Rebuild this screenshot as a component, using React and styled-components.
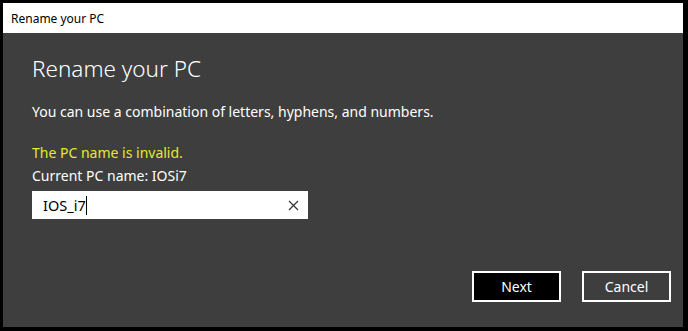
import React from 'react';
import styled, { createGlobalStyle } from 'styled-components';

const GlobalStyle = createGlobalStyle`
  html, body {
    margin: 0;
    padding: 0;
    background: #000;
  }
  body {
    font-family: "Noto Sans", "Open Sans", sans-serif;
  }
`;

const Screen = styled.div`
  width: 688px;
  height: 331px;
  padding: 3px 5px 4px 3px;
  box-sizing: border-box;
  background: #000;
`;

const Dialog = styled.div`
  height: 100%;
  display: flex;
  flex-direction: column;
  background: #3e3e3e;
`;

const TitleBar = styled.div`
  height: 30px;
  background: #fff;
  display: flex;
  align-items: center;
  padding-left: 8px;
  font-size: 12px;
  color: #000;
`;

const Body = styled.div`
  flex: 1;
  display: flex;
  flex-direction: column;
  padding: 21px 12px 25px 29px;
  color: #fff;
`;

const Heading = styled.h1`
  margin: 0;
  font-size: 22.5px;
  font-weight: 300;
  line-height: 30px;
`;

const Text = styled.p`
  margin: ${p => p.$top || 0}px 0 0;
  font-size: 14px;
  line-height: 22px;
  color: ${p => (p.$warn ? '#e8e830' : '#fff')};
`;

const Field = styled.div`
  margin-top: 4px;
  width: 276px;
  height: 28px;
  background: #fff;
  display: flex;
  align-items: center;
  padding: 0 9px 0 11px;
  box-sizing: border-box;
  color: #000;
  font-size: 14.5px;
`;

const Value = styled.span`
  flex: 1;
`;

const Caret = styled.span`
  display: inline-block;
  width: 1px;
  height: 19px;
  background: #000;
  vertical-align: -4px;
`;

const Footer = styled.div`
  margin-top: auto;
  display: flex;
  justify-content: flex-end;
  gap: 21px;
`;

const Button = styled.button`
  width: 89px;
  height: 31px;
  box-sizing: border-box;
  border: 2px solid #fff;
  background: ${p => (p.$primary ? '#000' : 'transparent')};
  color: #fff;
  font-family: inherit;
  font-size: 14px;
  padding: 0;
`;

export default function App() {
  return (
    <>
      <GlobalStyle />
      <Screen>
        <Dialog>
          <TitleBar>Rename your PC</TitleBar>
          <Body>
            <Heading>Rename your PC</Heading>
            <Text $top={17}>You can use a combination of letters, hyphens, and numbers.</Text>
            <Text $top={19} $warn>The PC name is invalid.</Text>
            <Text $top={1}>Current PC name: IOSi7</Text>
            <Field>
              <Value>IOS_i7<Caret /></Value>
              <svg width="11" height="11" viewBox="0 0 11 11">
                <path d="M1 1L10 10M10 1L1 10" stroke="#333" strokeWidth="1.2" />
              </svg>
            </Field>
            <Footer>
              <Button $primary>Next</Button>
              <Button>Cancel</Button>
            </Footer>
          </Body>
        </Dialog>
      </Screen>
    </>
  );
}
